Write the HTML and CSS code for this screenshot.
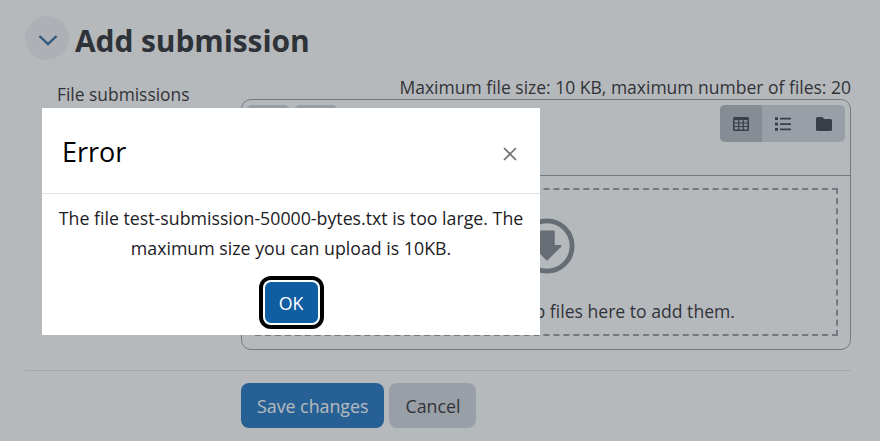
FILE: index.html
```html
<!DOCTYPE html>
<html lang="en">
  <head>
    <meta charset="UTF-8" />
    <title>Add submission</title>
    <link rel="stylesheet" href="styles.css">
  </head>
  <body>
    <div class="page">
      <div class="section-head">
        <span class="collapse-btn">
          <svg width="22" height="12" viewBox="0 0 22 12"><path d="M2.5 2l8.500 8 8.500-8" fill="none" stroke="#266196" stroke-width="2.400" /></svg>
        </span>
        <h2>Add submission</h2>
      </div>

      <div class="form-row">
        <div class="row-label">File submissions</div>
        <div class="row-field">
          <div class="limits">Maximum file size: 10 KB, maximum number of files: 20</div>
          <div class="picker">
            <div class="toolbar">
              <div class="tool-group">
                <span class="tool-btn"></span>
                <span class="tool-btn"></span>
              </div>
              <div class="view-group">
                <span class="view-btn active">
                  <svg width="16" height="14" viewBox="0 0 16 14"><path fill="#2f343b" fill-rule="evenodd" d="M1.500 0h13A1.500 1.500 0 0 1 16 1.500v11a1.500 1.500 0 0 1-1.500 1.500h-13A1.500 1.500 0 0 1 0 12.500v-11A1.500 1.500 0 0 1 1.500 0zM1.600 3v2.500h3.500V3zm4.700 0v2.500h3.400V3zm4.600 0v2.500h3.500V3zM1.600 6.500V9h3.500V6.500zm4.700 0V9h3.400V6.500zm4.600 0V9h3.500V6.500zM1.600 10v2.500h3.500V10zm4.700 0v2.500h3.400V10zm4.600 0v2.500h3.500V10z" /></svg>
                </span>
                <span class="view-btn">
                  <svg width="16" height="14" viewBox="0 0 16 14"><path fill="#2f343b" d="M0 .3h3v2.700H0zM5 .8h11v1.800H5zM0 5.700h3v2.700H0zM5 6.200h11V8H5zM0 11h3v2.700H0zM5 11.500h11v1.800H5z" /></svg>
                </span>
                <span class="view-btn">
                  <svg width="16" height="14" viewBox="0 0 16 14"><path fill="#2f343b" d="M1.500 0h4.800l2 2h6.200A1.500 1.500 0 0 1 16 3.500v9a1.500 1.500 0 0 1-1.500 1.500h-13A1.500 1.500 0 0 1 0 12.500v-11A1.500 1.500 0 0 1 1.500 0z" /></svg>
                </span>
              </div>
            </div>
            <div class="drop-area">
              <div class="drop-zone">
                <svg class="drop-icon" width="56" height="56" viewBox="0 0 58 58">
                  <circle cx="29" cy="29" r="26" fill="none" stroke="#7b8087" stroke-width="5" />
                  <path fill="#7b8087" d="M22 14h14v15h7L29 43 15 29h7z" stroke="#7b8087" stroke-width="2" stroke-linejoin="round" />
                </svg>
                <div class="drop-text">Drop files here to add them.</div>
              </div>
            </div>
          </div>
        </div>
      </div>

      <div class="actions">
        <button class="btn btn-primary">Save changes</button>
        <button class="btn btn-secondary">Cancel</button>
      </div>
    </div>

    <div class="backdrop"></div>

    <div class="dialog">
      <div class="dialog-head">
        <h5>Error</h5>
        <svg class="dialog-close" width="14" height="14" viewBox="0 0 14 14"><path d="M1 1l12 12M13 1L1 13" stroke="#6f6f6f" stroke-width="1.700" fill="none" /></svg>
      </div>
      <div class="dialog-body">The file test-submission-50000-bytes.txt is too large. The maximum size you can upload is 10KB.</div>
      <div class="dialog-foot">
        <button class="ok-btn">OK</button>
      </div>
    </div>
  </body>
</html>
```

FILE: styles.css
```css
* {
  margin: 0;
  padding: 0;
  box-sizing: border-box;
  font-family: "Open Sans", "Noto Sans", sans-serif;
}

html,
body {
  height: 100%;
  overflow: hidden;
  background-color: white;
}

.page {
  padding: 16px 29px 0 25px;
  color: #1d2125;
  font-size: 17.5px;
}

.section-head {
  display: flex;
  align-items: center;
  gap: 6px;
  height: 44px;
}

.collapse-btn {
  display: flex;
  justify-content: center;
  align-items: center;
  width: 44px;
  height: 44px;
  border-radius: 50%;
  background-color: #f0f2f4;
}

.collapse-btn svg {
  margin: 4px 0 0 2px;
}

h2 {
  margin-top: 5px;
  font-size: 30px;
  font-weight: 700;
  letter-spacing: -0.1px;
}

.form-row {
  display: flex;
  margin-top: 15px;
}

.row-label {
  width: 216px;
  padding: 7px 0 0 32px;
  line-height: 24px;
  font-size: 17.4px;
}

.row-field {
  flex: 1;
}

.limits {
  text-align: right;
  line-height: 24px;
}

.picker {
  height: 251px;
  border: 1px solid #8f959e;
  border-radius: 10px;
}

.toolbar {
  display: flex;
  justify-content: space-between;
  height: 76px;
  padding: 5px 5px 0 4px;
  border-bottom: 1px solid #8f959e;
}

.tool-group {
  display: flex;
  gap: 4px;
}

.tool-btn {
  width: 44px;
  height: 37px;
  border-radius: 6px;
  background-color: #ced4da;
}

.view-group {
  display: flex;
  width: 125px;
  height: 37px;
  border-radius: 5px;
  overflow: hidden;
  background-color: #ced4da;
}

.view-btn {
  display: flex;
  flex: 1;
  justify-content: center;
  align-items: center;
}

.view-btn.active {
  background-color: #adb5bd;
}

.drop-area {
  padding: 12px 12px 14px 13px;
}

.drop-zone {
  display: flex;
  flex-direction: column;
  align-items: center;
  height: 148px;
  border: 2px dashed #8f959e;
  padding-top: 28px;
}

.drop-text {
  margin: 25px 0 0 146px;
  line-height: 24px;
  font-size: 17.6px;
}

.actions {
  display: flex;
  gap: 5px;
  margin-top: 20px;
  padding: 12px 0 0 216px;
  border-top: 1px solid #dee2e6;
}

.btn {
  height: 45px;
  padding: 0 16px;
  border: none;
  border-radius: 8px;
  font-size: 17.8px;
}

.btn-primary {
  color: white;
  background-color: #0f6cbf;
}

.btn-secondary {
  color: #1d2125;
  background-color: #ced4da;
}

.backdrop {
  position: fixed;
  top: 0;
  left: 0;
  width: 100%;
  height: 100%;
  background-color: #495057;
  opacity: 0.4;
}

.dialog {
  position: fixed;
  top: 108px;
  left: 42px;
  width: 498px;
  height: 227px;
  background-color: white;
  color: #1d2125;
}

.dialog-head {
  display: flex;
  justify-content: space-between;
  align-items: center;
  height: 86px;
  padding: 0 23px 0 20px;
  border-bottom: 1px solid #dee2e6;
}

h5 {
  margin-top: 2px;
  font-size: 27px;
  font-weight: 400;
  color: black;
}

.dialog-close {
  margin-top: 6px;
}

.dialog-body {
  padding: 9px 12px 0;
  font-size: 17.75px;
  line-height: 30px;
  text-align: center;
}

.dialog-foot {
  display: flex;
  justify-content: center;
  margin-top: 17px;
}

.ok-btn {
  width: 57px;
  height: 45px;
  border: none;
  border-radius: 8px;
  color: white;
  background-color: #0f5ea2;
  font-size: 17.8px;
  box-shadow: inset 0 0 0 2px white, 0 0 0 4px black;
}
```
